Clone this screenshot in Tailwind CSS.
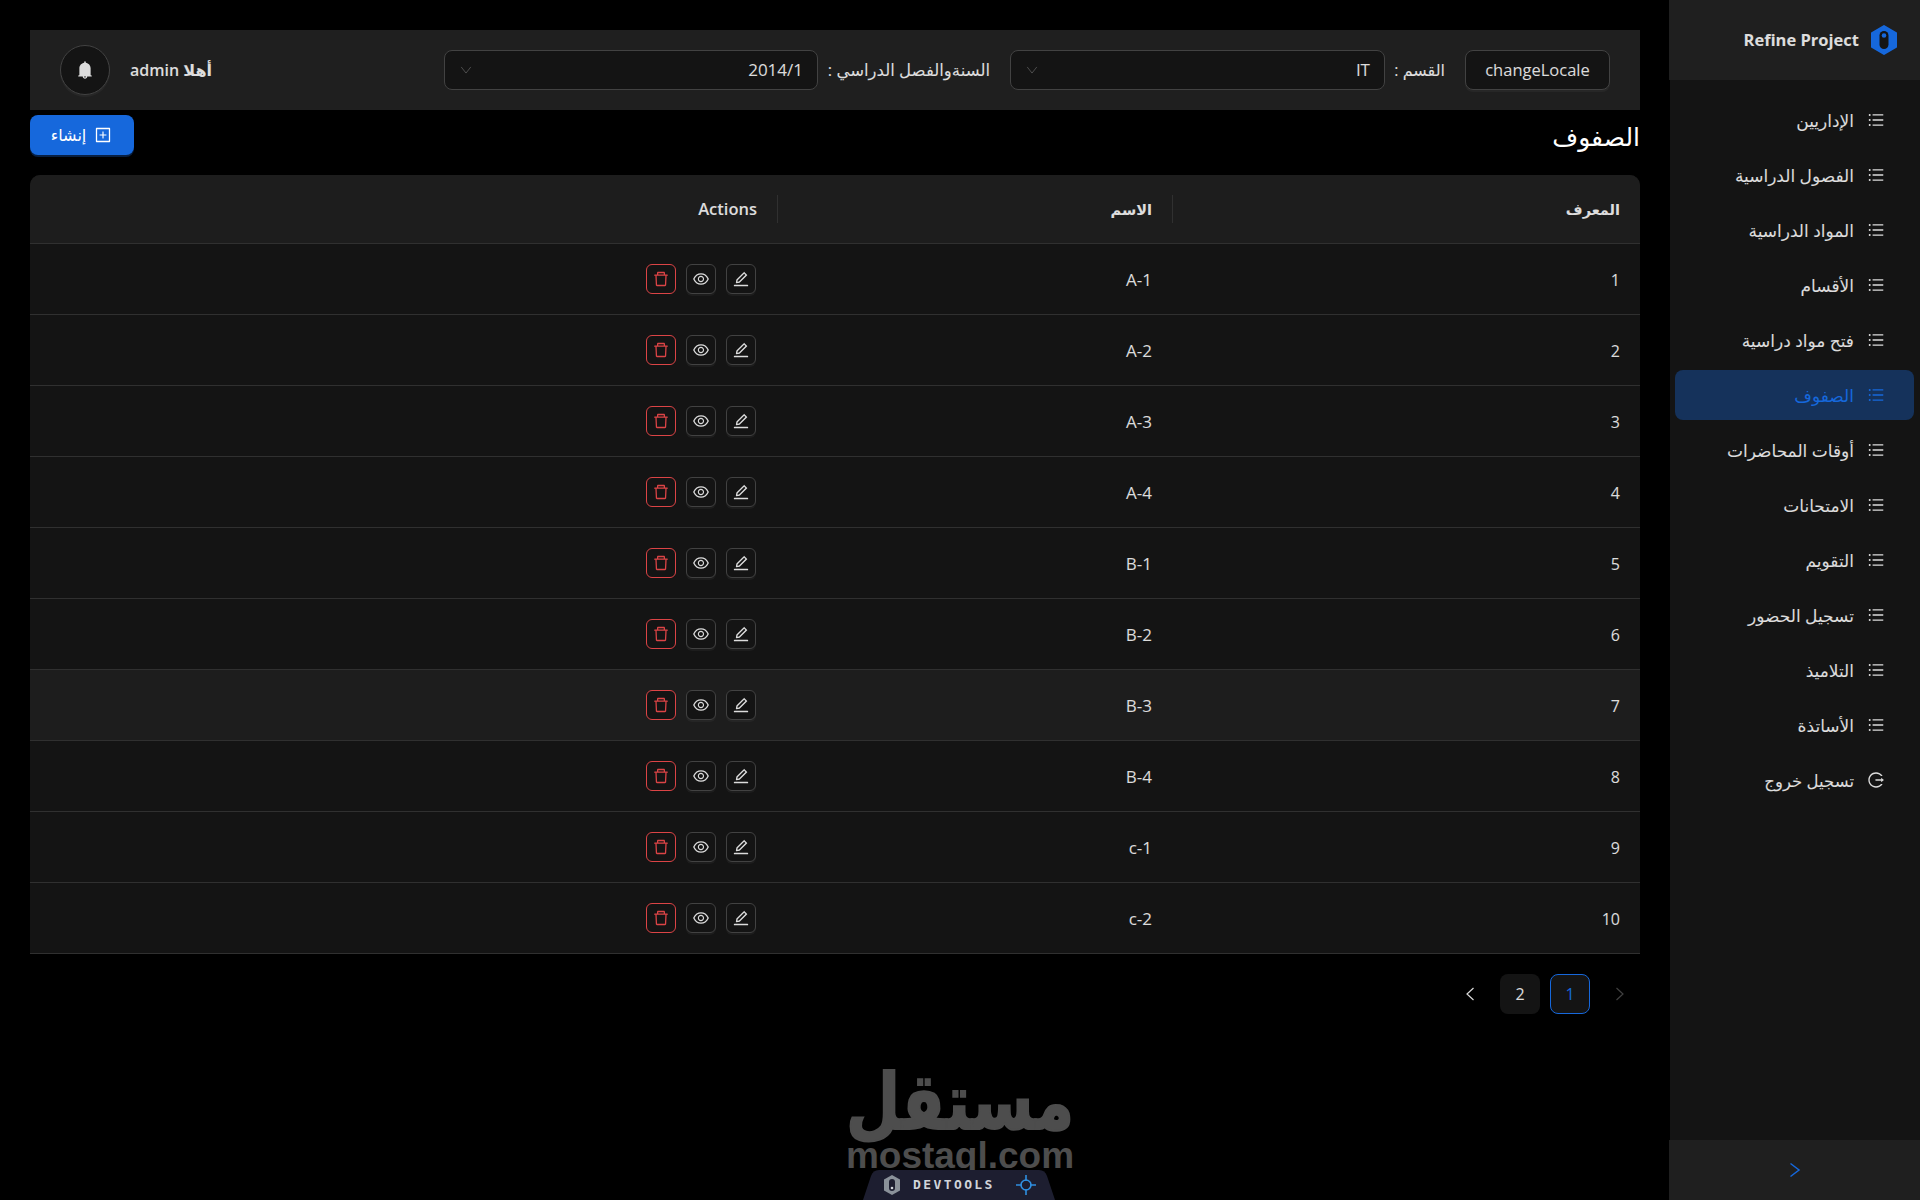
<!DOCTYPE html>
<html lang="ar" dir="rtl">
<head>
<meta charset="utf-8">
<title>Refine Project</title>
<script src="https://cdn.jsdelivr.net/npm/@tailwindcss/browser@4"></script>
</head>
<body class="bg-black text-[16px] text-white/85 font-['Open_Sans','DejaVu_Sans',sans-serif] overflow-hidden">
<svg class="hidden" xmlns="http://www.w3.org/2000/svg">
<symbol id="i-bars" viewBox="64 64 896 896"><path fill="currentColor" d="M912 192H328c-4.400 0-8 3.600-8 8v56c0 4.400 3.600 8 8 8h584c4.400 0 8-3.600 8-8v-56c0-4.400-3.600-8-8-8zm0 284H328c-4.400 0-8 3.600-8 8v56c0 4.400 3.600 8 8 8h584c4.400 0 8-3.600 8-8v-56c0-4.400-3.600-8-8-8zm0 284H328c-4.400 0-8 3.600-8 8v56c0 4.400 3.600 8 8 8h584c4.400 0 8-3.600 8-8v-56c0-4.400-3.600-8-8-8zM104 228a56 56 0 10112 0 56 56 0 10-112 0zm0 284a56 56 0 10112 0 56 56 0 10-112 0zm0 284a56 56 0 10112 0 56 56 0 10-112 0z"/></symbol>
<symbol id="i-edit" viewBox="64 64 896 896"><path fill="currentColor" d="M257.700 752c2 0 4-.2 6-.5L431.900 722c2-.4 3.900-1.300 5.300-2.800l423.900-423.900a9.960 9.960 0 000-14.100L694.900 114.900c-1.900-1.900-4.400-2.900-7.100-2.900s-5.200 1-7.100 2.900L256.800 538.800c-1.500 1.500-2.400 3.300-2.800 5.300l-29.500 168.200a33.500 33.500 0 009.400 29.800c6.600 6.400 14.900 9.900 23.800 9.900zm67.400-174.400L687.800 215l73.300 73.300-362.700 362.600-88.900 15.700 15.600-89zM880 836H144c-17.700 0-32 14.300-32 32v36c0 4.400 3.600 8 8 8h784c4.400 0 8-3.600 8-8v-36c0-17.700-14.300-32-32-32z"/></symbol>
<symbol id="i-eye" viewBox="64 64 896 896"><path fill="currentColor" d="M942.200 486.200C847.400 286.500 704.100 186 512 186c-192.200 0-335.400 100.500-430.200 300.300a60.300 60.300 0 000 51.500C176.600 737.500 319.900 838 512 838c192.200 0 335.400-100.500 430.200-300.300 7.700-16.200 7.700-35 0-51.500zM512 766c-161.300 0-279.400-81.800-362.700-254C232.600 339.800 350.700 258 512 258c161.300 0 279.400 81.800 362.700 254C791.500 684.200 673.400 766 512 766zm-4-430c-97.200 0-176 78.800-176 176s78.800 176 176 176 176-78.800 176-176-78.800-176-176-176zm0 288c-61.900 0-112-50.100-112-112s50.100-112 112-112 112 50.100 112 112-50.100 112-112 112z"/></symbol>
<symbol id="i-del" viewBox="64 64 896 896"><path fill="currentColor" d="M360 184h-8c4.400 0 8-3.600 8-8v8h304v-8c0 4.400 3.600 8 8 8h-8v72h72v-80c0-35.300-28.700-64-64-64H352c-35.300 0-64 28.700-64 64v80h72v-72zm504 72H160c-17.700 0-32 14.300-32 32v32c0 4.400 3.600 8 8 8h60.400l24.700 523c1.600 34.100 29.800 61 63.900 61h454c34.200 0 62.300-26.800 63.900-61l24.700-523H888c4.400 0 8-3.600 8-8v-32c0-17.700-14.300-32-32-32zM731.300 840H292.700l-24.200-512h487l-24.200 512z"/></symbol>
<symbol id="i-down" viewBox="0 0 16 16"><path fill="none" stroke="currentColor" stroke-width="1.100" d="M2.500 4.500 8 11.500l5.500-7"/></symbol>
</svg>

<div class="flex h-[1200px] w-[1920px]">
  <!-- Sidebar -->
  <aside class="w-[250px] shrink-0 flex flex-col bg-[#141414]">
    <div class="h-[80px] ml-[-1px] bg-[#1f1f1f] flex items-center gap-[10px] pr-[21px] shrink-0">
      <svg class="w-[30px] h-[30px] shrink-0" viewBox="0 0 30 30"><path fill="#1668dc" stroke="#1668dc" stroke-width="2" stroke-linejoin="round" d="M15 1 27 8v14l-12 7-12-7V8z"/><rect x="10.500" y="6" width="9" height="18" rx="4.500" fill="#141414"/><circle cx="15" cy="10.500" r="2.300" fill="#1668dc"/></svg>
      <span dir="ltr" class="font-bold text-[16.5px] text-white/85 pt-[1px]">Refine Project</span>
    </div>
    <nav class="flex-1 flex flex-col gap-[5px] pt-[15px] pr-[6px] pl-[5px] text-[17px]">
      <a class="h-[50px] flex items-center gap-[14px] pr-[30px] rounded-[8px]"><svg class="w-[16px] h-[16px]"><use href="#i-bars"/></svg><span class="pt-[2px]">الإداريين</span></a>
      <a class="h-[50px] flex items-center gap-[14px] pr-[30px] rounded-[8px]"><svg class="w-[16px] h-[16px]"><use href="#i-bars"/></svg><span class="pt-[2px]">الفصول الدراسية</span></a>
      <a class="h-[50px] flex items-center gap-[14px] pr-[30px] rounded-[8px]"><svg class="w-[16px] h-[16px]"><use href="#i-bars"/></svg><span class="pt-[2px]">المواد الدراسية</span></a>
      <a class="h-[50px] flex items-center gap-[14px] pr-[30px] rounded-[8px]"><svg class="w-[16px] h-[16px]"><use href="#i-bars"/></svg><span class="pt-[2px]">الأقسام</span></a>
      <a class="h-[50px] flex items-center gap-[14px] pr-[30px] rounded-[8px]"><svg class="w-[16px] h-[16px]"><use href="#i-bars"/></svg><span class="pt-[2px]">فتح مواد دراسية</span></a>
      <a class="h-[50px] flex items-center gap-[14px] pr-[30px] rounded-[8px] bg-[#15325b] text-[#1668dc]"><svg class="w-[16px] h-[16px]"><use href="#i-bars"/></svg><span class="pt-[2px]">الصفوف</span></a>
      <a class="h-[50px] flex items-center gap-[14px] pr-[30px] rounded-[8px]"><svg class="w-[16px] h-[16px]"><use href="#i-bars"/></svg><span class="pt-[2px]">أوقات المحاضرات</span></a>
      <a class="h-[50px] flex items-center gap-[14px] pr-[30px] rounded-[8px]"><svg class="w-[16px] h-[16px]"><use href="#i-bars"/></svg><span class="pt-[2px]">الامتحانات</span></a>
      <a class="h-[50px] flex items-center gap-[14px] pr-[30px] rounded-[8px]"><svg class="w-[16px] h-[16px]"><use href="#i-bars"/></svg><span class="pt-[2px]">التقويم</span></a>
      <a class="h-[50px] flex items-center gap-[14px] pr-[30px] rounded-[8px]"><svg class="w-[16px] h-[16px]"><use href="#i-bars"/></svg><span class="pt-[2px]">تسجيل الحضور</span></a>
      <a class="h-[50px] flex items-center gap-[14px] pr-[30px] rounded-[8px]"><svg class="w-[16px] h-[16px]"><use href="#i-bars"/></svg><span class="pt-[2px]">التلاميذ</span></a>
      <a class="h-[50px] flex items-center gap-[14px] pr-[30px] rounded-[8px]"><svg class="w-[16px] h-[16px]"><use href="#i-bars"/></svg><span class="pt-[2px]">الأساتذة</span></a>
      <a class="h-[50px] flex items-center gap-[14px] pr-[30px] rounded-[8px]"><svg class="w-[16px] h-[16px]" viewBox="64 64 896 896"><path fill="currentColor" d="M868 732h-70.300c-4.800 0-9.300 2.100-12.300 5.800-7 8.500-14.500 16.700-22.400 24.500a353.840 353.840 0 01-112.700 75.900A352.800 352.800 0 01512.400 866c-47.900 0-94.300-9.400-137.900-27.800a353.840 353.840 0 01-112.700-75.900 353.280 353.280 0 01-76-112.500C167.300 606.200 158 559.900 158 512s9.400-94.200 27.800-137.800c17.800-42.100 43.400-80 76-112.500s70.500-58.100 112.700-75.900c43.600-18.400 90-27.800 137.900-27.800 47.900 0 94.300 9.300 137.900 27.800 42.200 17.800 80.100 43.400 112.700 75.900 7.900 7.900 15.300 16.100 22.400 24.500 3 3.700 7.600 5.800 12.300 5.800H868c6.300 0 10.200-7 6.700-12.300C798 160.500 663.800 81.600 511.300 82 271.700 82.600 79.600 277.100 82 516.400 84.400 751.900 276.200 942 512.400 942c152.100 0 285.700-78.800 362.300-197.700 3.400-5.300-.4-12.300-6.700-12.300zm88.900-226.300L815 393.700c-5.300-4.200-13-.4-13 6.300v76H488c-4.400 0-8 3.600-8 8v56c0 4.400 3.600 8 8 8h314v76c0 6.800 7.800 10.500 13 6.300l141.900-112a8 8 0 000-12.600z"/></svg><span class="pt-[2px] text-[16.5px]">تسجيل خروج</span></a>
    </nav>
    <div class="h-[60px] ml-[-1px] bg-[#1f1f1f] flex items-center justify-center shrink-0 text-[#1668dc]">
      <svg class="w-[12px] h-[16px]" viewBox="0 0 12 16"><path fill="none" stroke="currentColor" stroke-width="1.500" d="M1.500 1.500 10 8l-8.500 6.500"/></svg>
    </div>
  </aside>

  <!-- Main -->
  <main class="flex-1 min-w-0 px-[30px] pt-[30px] flex flex-col">
    <header class="h-[80px] bg-[#1f1f1f] flex items-center justify-between px-[30px] shrink-0">
      <div class="flex items-center">
        <button class="h-[40px] w-[145px] rounded-[8px] bg-[#141414] border border-[#424242] shadow-[0_2px_0_rgba(255,255,255,0.04)] ml-[20px] text-[16.5px]">changeLocale</button>
        <span class="w-[50px] ml-[10px] whitespace-nowrap text-[16px]">القسم :</span>
        <div class="w-[375px] h-[40px] rounded-[8px] bg-[#141414] border border-[#424242] flex items-center justify-between px-[14px] ml-[20px] text-[17px]"><span>IT</span><svg class="w-[14px] h-[14px] text-white/25"><use href="#i-down"/></svg></div>
        <span class="w-[162px] ml-[10px] whitespace-nowrap text-[16.5px]">السنةوالفصل الدراسي :</span>
        <div class="w-[374px] h-[40px] rounded-[8px] bg-[#141414] border border-[#424242] flex items-center justify-between px-[14px] text-[17px]"><span>2014/1</span><svg class="w-[14px] h-[14px] text-white/25"><use href="#i-down"/></svg></div>
      </div>
      <div class="flex items-center gap-[20px]">
        <span class="font-semibold text-[16px]">أهلا admin</span>
        <button class="w-[50px] h-[50px] rounded-full bg-[#141414] border border-[#424242] shadow-[0_2px_0_rgba(255,255,255,0.04)] flex items-center justify-center text-white/85">
          <svg class="w-[18px] h-[18px]" viewBox="64 64 896 896"><path fill="currentColor" d="M816 768h-24V428c0-141.100-104.300-257.700-240-277.100V112c0-22.100-17.900-40-40-40s-40 17.900-40 40v38.900c-135.700 19.400-240 136-240 277.100v340h-24c-17.700 0-32 14.300-32 32v32c0 4.400 3.600 8 8 8h216c0 61.800 50.200 112 112 112s112-50.200 112-112h216c4.400 0 8-3.600 8-8v-32c0-17.700-14.300-32-32-32zM512 888c-26.500 0-48-21.500-48-48h96c0 26.500-21.500 48-48 48z"/></svg>
        </button>
      </div>
    </header>

    <div class="h-[40px] mt-[5px] flex items-center justify-between shrink-0">
      <h1 class="text-[25px] font-normal text-white leading-none mt-[2px]">الصفوف</h1>
      <button class="h-[40px] w-[104px] rounded-[8px] bg-[#1668dc] shadow-[0_2px_0_rgba(22,104,220,0.3)] flex items-center justify-center gap-[9px] text-white text-[16px]">
        <svg class="w-[16px] h-[16px] mr-[2px]" viewBox="64 64 896 896"><path fill="currentColor" d="M328 544h152v152c0 4.400 3.600 8 8 8h48c4.400 0 8-3.600 8-8V544h152c4.400 0 8-3.600 8-8v-48c0-4.400-3.600-8-8-8H544V328c0-4.400-3.600-8-8-8h-48c-4.400 0-8 3.600-8 8v152H328c-4.400 0-8 3.600-8 8v48c0 4.400 3.600 8 8 8z"/><path fill="currentColor" d="M880 112H144c-17.700 0-32 14.300-32 32v736c0 17.700 14.300 32 32 32h736c17.700 0 32-14.300 32-32V144c0-17.700-14.300-32-32-32zm-40 728H184V184h656v656z"/></svg>
        <span>إنشاء</span>
      </button>
    </div>

    <table class="mt-[20px] w-[1610px] table-fixed border-separate border-spacing-0 bg-[#141414] rounded-t-[10px]">
      <thead>
        <tr class="h-[69px] text-right text-[14.5px] font-semibold">
          <th class="w-[468px] relative bg-[#1d1d1d] border-b border-[#303030] px-[20px] pt-[2px] font-semibold rounded-tr-[10px]">المعرف<span class="absolute left-0 top-[20px] h-[28px] w-px bg-[#303030]"></span></th>
          <th class="w-[395px] relative bg-[#1d1d1d] border-b border-[#303030] px-[20px] pt-[2px] font-semibold">الاسم<span class="absolute left-0 top-[20px] h-[28px] w-px bg-[#303030]"></span></th>
          <th class="bg-[#1d1d1d] border-b border-[#303030] px-[20px] font-semibold text-[16.5px] rounded-tl-[10px]"><span dir="ltr">Actions</span></th>
        </tr>
      </thead>
      <tbody>
        <tr class="h-[71px]"><td class="border-b border-[#303030] px-[20px] pt-[2px]">1</td><td class="border-b border-[#303030] px-[20px] pt-[2px] text-[17px]"><span dir="ltr">A-1</span></td><td class="border-b border-[#303030] px-[20px]"><div class="flex gap-[10px] mr-[1px]"><button class="w-[30px] h-[30px] rounded-[6px] bg-[#141414] border border-[#424242] shadow-[0_2px_0_rgba(255,255,255,0.04)] flex items-center justify-center"><svg class="w-[16px] h-[16px]"><use href="#i-edit"/></svg></button><button class="w-[30px] h-[30px] rounded-[6px] bg-[#141414] border border-[#424242] shadow-[0_2px_0_rgba(255,255,255,0.04)] flex items-center justify-center"><svg class="w-[16px] h-[16px]"><use href="#i-eye"/></svg></button><button class="w-[30px] h-[30px] rounded-[6px] bg-[#141414] border border-[#dc4446] text-[#dc4446] flex items-center justify-center"><svg class="w-[16px] h-[16px]"><use href="#i-del"/></svg></button></div></td></tr>
        <tr class="h-[71px]"><td class="border-b border-[#303030] px-[20px] pt-[2px]">2</td><td class="border-b border-[#303030] px-[20px] pt-[2px] text-[17px]"><span dir="ltr">A-2</span></td><td class="border-b border-[#303030] px-[20px]"><div class="flex gap-[10px] mr-[1px]"><button class="w-[30px] h-[30px] rounded-[6px] bg-[#141414] border border-[#424242] shadow-[0_2px_0_rgba(255,255,255,0.04)] flex items-center justify-center"><svg class="w-[16px] h-[16px]"><use href="#i-edit"/></svg></button><button class="w-[30px] h-[30px] rounded-[6px] bg-[#141414] border border-[#424242] shadow-[0_2px_0_rgba(255,255,255,0.04)] flex items-center justify-center"><svg class="w-[16px] h-[16px]"><use href="#i-eye"/></svg></button><button class="w-[30px] h-[30px] rounded-[6px] bg-[#141414] border border-[#dc4446] text-[#dc4446] flex items-center justify-center"><svg class="w-[16px] h-[16px]"><use href="#i-del"/></svg></button></div></td></tr>
        <tr class="h-[71px]"><td class="border-b border-[#303030] px-[20px] pt-[2px]">3</td><td class="border-b border-[#303030] px-[20px] pt-[2px] text-[17px]"><span dir="ltr">A-3</span></td><td class="border-b border-[#303030] px-[20px]"><div class="flex gap-[10px] mr-[1px]"><button class="w-[30px] h-[30px] rounded-[6px] bg-[#141414] border border-[#424242] shadow-[0_2px_0_rgba(255,255,255,0.04)] flex items-center justify-center"><svg class="w-[16px] h-[16px]"><use href="#i-edit"/></svg></button><button class="w-[30px] h-[30px] rounded-[6px] bg-[#141414] border border-[#424242] shadow-[0_2px_0_rgba(255,255,255,0.04)] flex items-center justify-center"><svg class="w-[16px] h-[16px]"><use href="#i-eye"/></svg></button><button class="w-[30px] h-[30px] rounded-[6px] bg-[#141414] border border-[#dc4446] text-[#dc4446] flex items-center justify-center"><svg class="w-[16px] h-[16px]"><use href="#i-del"/></svg></button></div></td></tr>
        <tr class="h-[71px]"><td class="border-b border-[#303030] px-[20px] pt-[2px]">4</td><td class="border-b border-[#303030] px-[20px] pt-[2px] text-[17px]"><span dir="ltr">A-4</span></td><td class="border-b border-[#303030] px-[20px]"><div class="flex gap-[10px] mr-[1px]"><button class="w-[30px] h-[30px] rounded-[6px] bg-[#141414] border border-[#424242] shadow-[0_2px_0_rgba(255,255,255,0.04)] flex items-center justify-center"><svg class="w-[16px] h-[16px]"><use href="#i-edit"/></svg></button><button class="w-[30px] h-[30px] rounded-[6px] bg-[#141414] border border-[#424242] shadow-[0_2px_0_rgba(255,255,255,0.04)] flex items-center justify-center"><svg class="w-[16px] h-[16px]"><use href="#i-eye"/></svg></button><button class="w-[30px] h-[30px] rounded-[6px] bg-[#141414] border border-[#dc4446] text-[#dc4446] flex items-center justify-center"><svg class="w-[16px] h-[16px]"><use href="#i-del"/></svg></button></div></td></tr>
        <tr class="h-[71px]"><td class="border-b border-[#303030] px-[20px] pt-[2px]">5</td><td class="border-b border-[#303030] px-[20px] pt-[2px] text-[17px]"><span dir="ltr">B-1</span></td><td class="border-b border-[#303030] px-[20px]"><div class="flex gap-[10px] mr-[1px]"><button class="w-[30px] h-[30px] rounded-[6px] bg-[#141414] border border-[#424242] shadow-[0_2px_0_rgba(255,255,255,0.04)] flex items-center justify-center"><svg class="w-[16px] h-[16px]"><use href="#i-edit"/></svg></button><button class="w-[30px] h-[30px] rounded-[6px] bg-[#141414] border border-[#424242] shadow-[0_2px_0_rgba(255,255,255,0.04)] flex items-center justify-center"><svg class="w-[16px] h-[16px]"><use href="#i-eye"/></svg></button><button class="w-[30px] h-[30px] rounded-[6px] bg-[#141414] border border-[#dc4446] text-[#dc4446] flex items-center justify-center"><svg class="w-[16px] h-[16px]"><use href="#i-del"/></svg></button></div></td></tr>
        <tr class="h-[71px]"><td class="border-b border-[#303030] px-[20px] pt-[2px]">6</td><td class="border-b border-[#303030] px-[20px] pt-[2px] text-[17px]"><span dir="ltr">B-2</span></td><td class="border-b border-[#303030] px-[20px]"><div class="flex gap-[10px] mr-[1px]"><button class="w-[30px] h-[30px] rounded-[6px] bg-[#141414] border border-[#424242] shadow-[0_2px_0_rgba(255,255,255,0.04)] flex items-center justify-center"><svg class="w-[16px] h-[16px]"><use href="#i-edit"/></svg></button><button class="w-[30px] h-[30px] rounded-[6px] bg-[#141414] border border-[#424242] shadow-[0_2px_0_rgba(255,255,255,0.04)] flex items-center justify-center"><svg class="w-[16px] h-[16px]"><use href="#i-eye"/></svg></button><button class="w-[30px] h-[30px] rounded-[6px] bg-[#141414] border border-[#dc4446] text-[#dc4446] flex items-center justify-center"><svg class="w-[16px] h-[16px]"><use href="#i-del"/></svg></button></div></td></tr>
        <tr class="h-[71px] bg-[#1d1d1d]"><td class="border-b border-[#303030] px-[20px] pt-[2px]">7</td><td class="border-b border-[#303030] px-[20px] pt-[2px] text-[17px]"><span dir="ltr">B-3</span></td><td class="border-b border-[#303030] px-[20px]"><div class="flex gap-[10px] mr-[1px]"><button class="w-[30px] h-[30px] rounded-[6px] bg-[#141414] border border-[#424242] shadow-[0_2px_0_rgba(255,255,255,0.04)] flex items-center justify-center"><svg class="w-[16px] h-[16px]"><use href="#i-edit"/></svg></button><button class="w-[30px] h-[30px] rounded-[6px] bg-[#141414] border border-[#424242] shadow-[0_2px_0_rgba(255,255,255,0.04)] flex items-center justify-center"><svg class="w-[16px] h-[16px]"><use href="#i-eye"/></svg></button><button class="w-[30px] h-[30px] rounded-[6px] bg-[#141414] border border-[#dc4446] text-[#dc4446] flex items-center justify-center"><svg class="w-[16px] h-[16px]"><use href="#i-del"/></svg></button></div></td></tr>
        <tr class="h-[71px]"><td class="border-b border-[#303030] px-[20px] pt-[2px]">8</td><td class="border-b border-[#303030] px-[20px] pt-[2px] text-[17px]"><span dir="ltr">B-4</span></td><td class="border-b border-[#303030] px-[20px]"><div class="flex gap-[10px] mr-[1px]"><button class="w-[30px] h-[30px] rounded-[6px] bg-[#141414] border border-[#424242] shadow-[0_2px_0_rgba(255,255,255,0.04)] flex items-center justify-center"><svg class="w-[16px] h-[16px]"><use href="#i-edit"/></svg></button><button class="w-[30px] h-[30px] rounded-[6px] bg-[#141414] border border-[#424242] shadow-[0_2px_0_rgba(255,255,255,0.04)] flex items-center justify-center"><svg class="w-[16px] h-[16px]"><use href="#i-eye"/></svg></button><button class="w-[30px] h-[30px] rounded-[6px] bg-[#141414] border border-[#dc4446] text-[#dc4446] flex items-center justify-center"><svg class="w-[16px] h-[16px]"><use href="#i-del"/></svg></button></div></td></tr>
        <tr class="h-[71px]"><td class="border-b border-[#303030] px-[20px] pt-[2px]">9</td><td class="border-b border-[#303030] px-[20px] pt-[2px] text-[17px]"><span dir="ltr">c-1</span></td><td class="border-b border-[#303030] px-[20px]"><div class="flex gap-[10px] mr-[1px]"><button class="w-[30px] h-[30px] rounded-[6px] bg-[#141414] border border-[#424242] shadow-[0_2px_0_rgba(255,255,255,0.04)] flex items-center justify-center"><svg class="w-[16px] h-[16px]"><use href="#i-edit"/></svg></button><button class="w-[30px] h-[30px] rounded-[6px] bg-[#141414] border border-[#424242] shadow-[0_2px_0_rgba(255,255,255,0.04)] flex items-center justify-center"><svg class="w-[16px] h-[16px]"><use href="#i-eye"/></svg></button><button class="w-[30px] h-[30px] rounded-[6px] bg-[#141414] border border-[#dc4446] text-[#dc4446] flex items-center justify-center"><svg class="w-[16px] h-[16px]"><use href="#i-del"/></svg></button></div></td></tr>
        <tr class="h-[71px]"><td class="border-b border-[#303030] px-[20px] pt-[2px]">10</td><td class="border-b border-[#303030] px-[20px] pt-[2px] text-[17px]"><span dir="ltr">c-2</span></td><td class="border-b border-[#303030] px-[20px]"><div class="flex gap-[10px] mr-[1px]"><button class="w-[30px] h-[30px] rounded-[6px] bg-[#141414] border border-[#424242] shadow-[0_2px_0_rgba(255,255,255,0.04)] flex items-center justify-center"><svg class="w-[16px] h-[16px]"><use href="#i-edit"/></svg></button><button class="w-[30px] h-[30px] rounded-[6px] bg-[#141414] border border-[#424242] shadow-[0_2px_0_rgba(255,255,255,0.04)] flex items-center justify-center"><svg class="w-[16px] h-[16px]"><use href="#i-eye"/></svg></button><button class="w-[30px] h-[30px] rounded-[6px] bg-[#141414] border border-[#dc4446] text-[#dc4446] flex items-center justify-center"><svg class="w-[16px] h-[16px]"><use href="#i-del"/></svg></button></div></td></tr>
      </tbody>
    </table>

    <div class="mt-[20px] flex items-center gap-[10px]">
      <span class="w-[40px] h-[40px] flex items-center justify-center text-white/25"><svg class="w-[10px] h-[14px]" viewBox="0 0 10 14"><path fill="none" stroke="currentColor" stroke-width="1.200" d="M1.500 1 8 7l-6.500 6"/></svg></span>
      <span class="w-[40px] h-[40px] rounded-[8px] bg-[#141414] border border-[#1668dc] text-[#1668dc] flex items-center justify-center">1</span>
      <span class="w-[40px] h-[40px] rounded-[8px] bg-[#141414] flex items-center justify-center">2</span>
      <span class="w-[40px] h-[40px] flex items-center justify-center"><svg class="w-[10px] h-[14px]" viewBox="0 0 10 14"><path fill="none" stroke="currentColor" stroke-width="1.200" d="M8.500 1 2 7l6.500 6"/></svg></span>
    </div>
  </main>
</div>

<!-- Watermark + devtools overlay -->
<div class="absolute left-[810px] top-[1068px] w-[300px] text-center text-[#4d4d4d] font-bold font-['DejaVu_Sans',sans-serif] text-[78px] leading-[68px] scale-x-[0.8] [-webkit-text-stroke:2px_#4d4d4d]">مستقل</div>
<div dir="ltr" class="absolute left-[835px] top-[1142px] w-[250px] text-center text-[#4d4d4d] font-bold font-['Liberation_Sans',sans-serif] text-[37px] leading-[28px]">mostaql.com</div>
<div dir="ltr" class="absolute left-[863px] top-[1170px] w-[192px] h-[30px] bg-[#1d1e30] [clip-path:path('M0_30L8_6Q10_0_16_0H176Q182_0_184_6L192_30Z')] flex items-center pl-[19px] gap-[11px]">
  <svg class="w-[20px] h-[20px] shrink-0" viewBox="0 0 20 20"><path fill="#8a9199" d="M10 0 18 4.500v11L10 20 2 15.500v-11z"/><rect x="7" y="4" width="6" height="12" rx="3" fill="#1d1e30"/><circle cx="10" cy="13" r="1.300" fill="#d0d4da"/></svg>
  <span class="font-['DejaVu_Sans_Mono',monospace] font-bold text-[13px] tracking-[2.4px] text-[#d0d4da]">DEVTOOLS</span>
  <svg class="w-[20px] h-[20px] shrink-0 ml-[10px] text-[#2f8fe0]" viewBox="0 0 20 20"><circle cx="10" cy="10" r="5" fill="none" stroke="currentColor" stroke-width="1.600"/><path stroke="currentColor" stroke-width="1.600" d="M10 0v6M10 14v6M0 10h6M14 10h6"/></svg>
</div>
</body>
</html>
